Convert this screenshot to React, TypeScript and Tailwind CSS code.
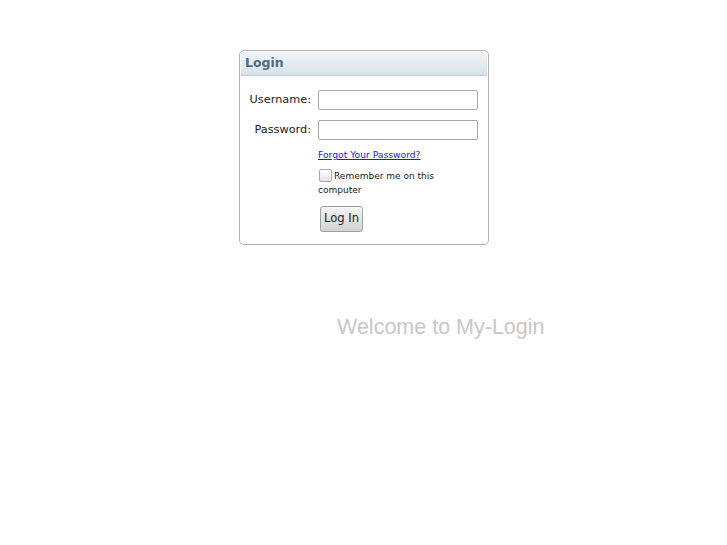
import React from 'react';

const App: React.FC = () => {
    return (
        <div className="min-h-[545px] bg-white font-['DejaVu_Sans',sans-serif] text-[#222]">
            <div className="pt-[50px] flex justify-center">
                <div className="w-[250px] h-[195px] ml-[1px] border border-[#b4b4b4] rounded-[5px] p-[1px] bg-white">
                    <div className="h-[24px] rounded-t-[3px] border-b border-[#bccbd6] bg-gradient-to-b from-[#f1f5f8] to-[#d6e2ea] pl-[4px] flex items-center">
                        <span className="text-[12.5px] font-bold text-[#4f6b80]">Login</span>
                    </div>
                    <form className="pt-[14px]">
                        <div className="flex items-center h-[20px]">
                            <label className="w-[70px] text-right text-[11.3px]" htmlFor="username">Username:</label>
                            <input id="username" type="text" className="ml-[7px] w-[160px] h-[20px] border border-[#a8a8a8] rounded-[2px]" />
                        </div>
                        <div className="flex items-center h-[20px] mt-[10px]">
                            <label className="w-[70px] text-right text-[11.3px]" htmlFor="password">Password:</label>
                            <input id="password" type="password" className="ml-[7px] w-[160px] h-[20px] border border-[#a8a8a8] rounded-[2px]" />
                        </div>
                        <div className="pl-[77px] h-[24px] pt-[6px] leading-[14px]">
                            <a href="#" className="text-[9.2px] text-[#1a1aee] underline">Forgot Your Password?</a>
                        </div>
                        <div className="pl-[77px] mt-[5px] w-[210px] text-[9px] leading-[14px]">
                            <span className="inline-block align-[-3px] w-[13px] h-[13px] ml-[1px] mr-[2px] border border-[#a8a8a8] rounded-[2px] bg-gradient-to-b from-white to-[#e6e6e6]"></span>
                            <span>Remember me on this computer</span>
                        </div>
                        <div className="pl-[79px] mt-[8px]">
                            <button type="button" className="w-[43px] h-[26px] border border-[#a0a0a0] rounded-[3px] bg-gradient-to-b from-[#f4f4f4] to-[#d2d2d2] text-[11.5px]">Log In</button>
                        </div>
                    </form>
                </div>
            </div>
            <div className="mt-[66px] pl-[337px] font-['Liberation_Sans',Arial,sans-serif] text-[21.5px] text-[#c8c8c8]">
                Welcome to My-Login
            </div>
        </div>
    );
};

export default App;
